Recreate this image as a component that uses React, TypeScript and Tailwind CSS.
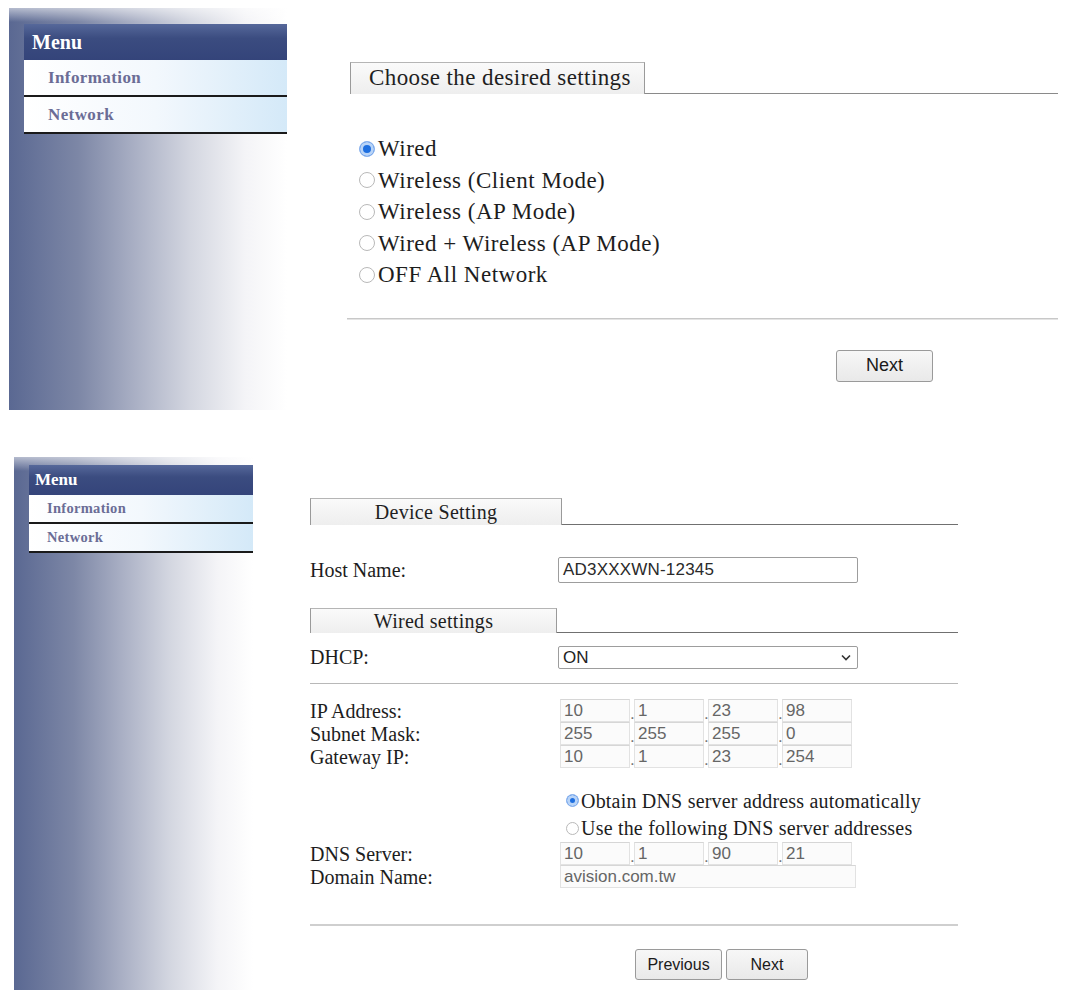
import { ReactNode } from "react";

const serif = "font-['Liberation_Serif',_'Times_New_Roman',_serif]";
const sans = "font-['Liberation_Sans',_Arial,_sans-serif]";

type SideMenuProps = {
  big?: boolean;
};

// Left navigation column with the blue-to-white fade
const SideMenu = ({ big }: SideMenuProps) => (
  <div
    className={`relative shrink-0 bg-[linear-gradient(to_right,#5a6892,#7d87a6_25%,#a9afc4_45%,#d3d6e0_65%,#f4f4f7_85%,#ffffff)] ${
      big ? "w-[278px] h-[402px] pl-[15px] pt-[16px]" : "w-[239px] h-[533px] pl-[15px] pt-[8px]"
    }`}
  >
    <div className="absolute inset-x-0 top-0 h-[14px] bg-[linear-gradient(to_bottom,rgba(255,255,255,0.55),rgba(255,255,255,0))]" />
    <div className="relative">
      <div
        className={`bg-[linear-gradient(to_bottom,#56689a,#3b4c80_40%,#34447a)] text-white font-bold ${serif} ${
          big ? "h-[36px] text-[20px] pl-[8px] leading-[36px]" : "h-[30px] text-[17px] pl-[6px] leading-[30px]"
        }`}
      >
        Menu
      </div>
      {["Information", "Network"].map((item) => (
        <div
          key={item}
          className={`bg-[linear-gradient(to_right,#ffffff,#f3f8fd_50%,#d4e9f8)] border-b-2 border-[#1a1a1a] text-[#6b6d96] font-bold ${serif} ${
            big
              ? "h-[37px] text-[17px] tracking-[0.4px] pl-[24px] leading-[35px]"
              : "h-[29px] text-[14.5px] tracking-[0.3px] pl-[18px] leading-[27px]"
          }`}
        >
          {item}
        </div>
      ))}
    </div>
  </div>
);

type TabProps = {
  label: string;
  width: string;
  rule: string;
  className?: string;
};

// Tab-shaped heading with a rule running off to the right
const TabHeading = ({ label, width, rule, className }: TabProps) => (
  <div className={`flex items-end ${className ?? ""}`}>
    <div
      className={`${width} shrink-0 border-l border-t border-r border-[#9a9a9a] border-t-[#b5b5b5] bg-[linear-gradient(to_bottom,#fafafa,#eeeeee)] text-[#1f1f1f] ${serif}`}
    >
      {label}
    </div>
    <div className={`flex-1 border-b ${rule}`} />
  </div>
);

const Radio = ({ on, size }: { on?: boolean; size: string }) =>
  on ? (
    <span className={`${size} shrink-0 rounded-full bg-[#1e6fe0] ring-[3px] ring-inset ring-[#b9d4f7] border border-[#8db4ee]`} />
  ) : (
    <span className={`${size} shrink-0 rounded-full border border-[#b9b9b9] bg-white`} />
  );

const Button = ({ children, className }: { children: ReactNode; className: string }) => (
  <button
    className={`${className} rounded-[3px] border border-[#9a9a9a] bg-[linear-gradient(to_bottom,#f7f7f7,#e9e9e9)] text-[#1a1a1a] ${sans}`}
  >
    {children}
  </button>
);

const IpBoxes = ({ parts }: { parts: string[] }) => (
  <div className={`flex items-end ${sans} text-[17px] text-[#666]`}>
    {parts.map((p, i) => (
      <div key={i} className="flex items-end">
        {i > 0 && <span className="w-[4px] leading-[17px] text-[#777]">.</span>}
        <div className="w-[70px] h-[23px] border border-[#e2e2e2] border-t-[#d6d6d6] bg-[#fbfbfb] pl-[3px] leading-[21px]">
          {p}
        </div>
      </div>
    ))}
  </div>
);

const choices = [
  "Wired",
  "Wireless (Client Mode)",
  "Wireless (AP Mode)",
  "Wired + Wireless (AP Mode)",
  "OFF All Network",
];

const ipRows: [string, string[]][] = [
  ["IP Address:", ["10", "1", "23", "98"]],
  ["Subnet Mask:", ["255", "255", "255", "0"]],
  ["Gateway IP:", ["10", "1", "23", "254"]],
];

const App = () => {
  return (
    <div className={`w-[1065px] h-[990px] bg-white overflow-hidden ${serif}`}>
      {/* First page: network type */}
      <div className="flex pt-[8px] pl-[9px] h-[457px]">
        <SideMenu big />
        <div className="ml-[60px] w-[711px]">
          <TabHeading
            label="Choose the desired settings"
            width="w-[295px] h-[32px] ml-[3px] pl-[18px] text-[23px] tracking-[0.4px] leading-[30px]"
            rule="border-[#8a8a8a]"
            className="mt-[54px]"
          />
          <div className="mt-[39px] pl-[12px] flex flex-col text-[23px] tracking-[0.5px] text-[#1d1d1d]">
            {choices.map((c, i) => (
              <label key={c} className="flex items-center h-[31.5px] gap-[3px]">
                <Radio on={i === 0} size="w-[16px] h-[16px]" />
                <span className="leading-[31px]">{c}</span>
              </label>
            ))}
          </div>
          <div className="mt-[27px] h-[2px] bg-[#c8c8c8] border-b border-[#e4e4e4]" />
          <div className="mt-[30px] pl-[489px]">
            <Button className="w-[97px] h-[32px] text-[18px]">Next</Button>
          </div>
        </div>
      </div>

      {/* Second page: device and wired settings */}
      <div className="flex pl-[14px]">
        <SideMenu />
        <div className="ml-[57px] w-[648px] text-[20px] text-[#1d1d1d]">
          <TabHeading
            label="Device Setting"
            width="w-[252px] h-[27px] text-center text-[20px] tracking-[0.3px] leading-[26px]"
            rule="border-[#707070]"
            className="mt-[41px]"
          />
          <div className="mt-[32px] grid grid-cols-[248px_300px] items-center h-[26px]">
            <span className="leading-[26px]">Host Name:</span>
            <div className={`h-[26px] rounded-[2px] border border-[#9d9d9d] pl-[4px] leading-[24px] text-[17px] tracking-[0.2px] text-[#2a2a2a] ${sans}`}>
              AD3XXXWN-12345
            </div>
          </div>
          <TabHeading
            label="Wired settings"
            width="w-[247px] h-[25px] text-center text-[20px] tracking-[0.3px] leading-[24px]"
            rule="border-[#707070]"
            className="mt-[25px]"
          />
          <div className="mt-[13px] grid grid-cols-[248px_300px] items-center h-[23px]">
            <span className="leading-[23px]">DHCP:</span>
            <div className={`h-[23px] rounded-[2px] border border-[#9d9d9d] pl-[4px] pr-[6px] flex items-center justify-between text-[17px] text-[#222] ${sans}`}>
              <span>ON</span>
              <svg width="10" height="7" viewBox="0 0 10 7" fill="none" stroke="#333" strokeWidth="1.6">
                <path d="M1 1.5 L5 5.5 L9 1.5" />
              </svg>
            </div>
          </div>
          <div className="mt-[14px] h-px bg-[#b8b8b8]" />
          <div className="mt-[15px] flex flex-col">
            {ipRows.map(([label, parts]) => (
              <div key={label} className="grid grid-cols-[250px_300px] items-center h-[23px]">
                <span className="leading-[22px]">{label}</span>
                <IpBoxes parts={parts} />
              </div>
            ))}
          </div>
          <div className="mt-[19px] pl-[256px] flex flex-col text-[20px] tracking-[0.2px]">
            <label className="flex items-center h-[27px] gap-[2px]">
              <Radio on size="w-[13px] h-[13px]" />
              <span className="leading-[26px]">Obtain DNS server address automatically</span>
            </label>
            <label className="flex items-center h-[28px] gap-[2px]">
              <Radio size="w-[13px] h-[13px]" />
              <span className="leading-[26px]">Use the following DNS server addresses</span>
            </label>
          </div>
          <div className="flex flex-col">
            <div className="grid grid-cols-[250px_300px] items-center h-[23px]">
              <span className="leading-[22px]">DNS Server:</span>
              <IpBoxes parts={["10", "1", "90", "21"]} />
            </div>
            <div className="grid grid-cols-[250px_300px] items-center h-[23px]">
              <span className="leading-[22px]">Domain Name:</span>
              <div className={`w-[296px] h-[23px] border border-[#e2e2e2] border-t-[#d6d6d6] bg-[#fbfbfb] pl-[3px] leading-[21px] text-[17px] text-[#666] ${sans}`}>
                avision.com.tw
              </div>
            </div>
          </div>
          <div className="mt-[36px] h-[2px] bg-[#cfcfcf]" />
          <div className="mt-[23px] pl-[325px] flex gap-[4px]">
            <Button className="w-[87px] h-[31px] text-[16px]">Previous</Button>
            <Button className="w-[82px] h-[31px] text-[16px]">Next</Button>
          </div>
        </div>
      </div>
    </div>
  );
};

export default App;
